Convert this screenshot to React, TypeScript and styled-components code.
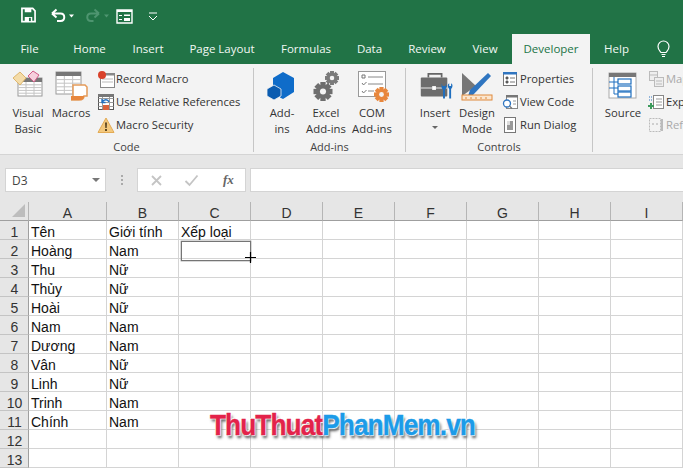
import React from "react";
import styled, { createGlobalStyle } from "styled-components";

const Global = createGlobalStyle`
  html, body { margin: 0; padding: 0; background: #fff; }
  body { width: 683px; height: 469px; overflow: hidden; font-family: "Open Sans", "Liberation Sans", sans-serif; }
`;
const Page = styled.div`position: relative; width: 683px; height: 469px; overflow: hidden; display: flex; flex-direction: column;`;
const TitleBar = styled.div`background: #217346; height: 34px; display: flex; align-items: center; padding: 0 0 2px 21px; flex: none; box-sizing: border-box;`;
const QatIcon = styled.span<{ $w: number; $ml?: number }>`display: block; width: ${p => p.$w}px; margin-left: ${p => p.$ml ?? 0}px; height: 18px; flex: none; svg { display: block; }`;
const TabBar = styled.div`background: #217346; height: 30px; display: flex; align-items: stretch; flex: none;`;
const Tab = styled.div<{ $w: number; $active?: boolean; $ml?: number }>`
  flex: none; width: ${p => p.$w}px; margin-left: ${p => p.$ml ?? 0}px; display: flex; align-items: center; justify-content: center; padding-bottom: 1px; box-sizing: border-box;
  font-size: 11.5px; color: ${p => p.$active ? "#217346" : "#f2f8f4"}; background: ${p => p.$active ? "#f3f3f3" : "transparent"};
  white-space: nowrap;
`;
const Ribbon = styled.div`background: #f3f3f3; height: 91px; display: flex; flex: none; border-bottom: 1px solid #d4d4d4; box-sizing: border-box; overflow: hidden;`;
const Group = styled.div<{ $w: number }>`flex: none; width: ${p => p.$w}px; height: 84px; display: flex; flex-direction: column; border-right: 1px solid #c6c6c6; margin-top: 4px; box-sizing: border-box;`;
const LastGroup = styled.div`flex: 1; margin-top: 4px; min-width: 0;`;
const GroupBody = styled.div<{ $pl: number }>`display: flex; flex: none; height: 72px; box-sizing: border-box; padding-left: ${p => p.$pl}px; padding-top: 2px;`;
const GroupLabel = styled.div`height: 12px; line-height: 14px; font-size: 11px; text-align: center; color: #444; flex: none;`;
const BigBtn = styled.div<{ $w: number }>`flex: none; width: ${p => p.$w}px; display: flex; flex-direction: column; align-items: center; font-size: 11.3px; line-height: 16px; color: #333; text-align: center; white-space: nowrap;`;
const BigIcon = styled.span`display: block; width: 38px; height: 35px; svg { display: block; }`;
const SmallStack = styled.div<{ $ml?: number }>`display: flex; flex-direction: column; margin: -3px 0 0 ${p => p.$ml ?? 0}px; flex: none;`;
const SmallBtn = styled.div<{ $off?: boolean }>`height: 23px; display: flex; align-items: center; gap: 1px; font-size: 11.2px; color: ${p => p.$off ? "#aaa" : "#333"}; white-space: nowrap; svg { display: block; flex: none; }`;
const Caret = styled.span`display: block; width: 0; height: 0; margin-top: 5px; border: 3px solid transparent; border-top: 3px solid #666; border-bottom: 0;`;
const FormulaRow = styled.div`background: #e6e6e6; height: 47px; flex: none; display: flex; align-items: flex-start; padding: 13px 0 0 5px; box-sizing: border-box;`;
const NameBox = styled.div`width: 101px; height: 24px; box-sizing: border-box; background: #fff; border: 1px solid #d4d4d4; display: flex; align-items: center; justify-content: space-between; padding: 0 5px 0 6px; font-size: 12px; color: #444;`;
const NameArrow = styled.span`display: block; width: 0; height: 0; border: 4px solid transparent; border-top: 4px solid #777; border-bottom: 0;`;
const Dots = styled.div`width: 31px; flex: none; display: flex; flex-direction: column; align-items: center; gap: 2px; padding-top: 7px;`;
const Dot = styled.span`display: block; width: 2px; height: 2px; background: #aaa;`;
const FxBox = styled.div`width: 109px; height: 24px; box-sizing: border-box; background: #fff; border: 1px solid #d4d4d4; display: flex; align-items: center; padding-left: 12px; gap: 21px; flex: none;`;
const FxLabel = styled.span`font-family: "Liberation Serif", serif; font-style: italic; font-weight: 700; font-size: 13px; color: #666; margin-left: 3px;`;
const FormulaInput = styled.div`flex: 1; height: 24px; margin-left: 4px; box-sizing: border-box; background: #fff; border: 1px solid #d4d4d4; border-right: 0;`;
const Sheet = styled.div`display: grid; grid-template-columns: 29px 78px repeat(8, 72px); grid-auto-rows: 19px; flex: 1; background: #fff;`;
const Corner = styled.div`background: #e6e6e6; border-right: 1px solid #b5b5b5; border-bottom: 1px solid #9f9f9f; box-sizing: border-box; height: 19px; display:flex; justify-content:flex-end; align-items:flex-end; padding: 0 3px 3px 0; svg{display:block;}`;
const ColHead = styled.div`background: #e6e6e6; border-right: 1px solid #b5b5b5; border-bottom: 1px solid #9f9f9f; box-sizing: border-box; text-align: center; font: 14px/22px "Liberation Sans", sans-serif; color: #333;`;
const RowHead = styled.div`background: #e6e6e6; border-right: 1px solid #9f9f9f; border-bottom: 1px solid #c4c4c4; box-sizing: border-box; text-align: center; font: 14px/22px "Liberation Sans", sans-serif; color: #333; padding-left: 1px;`;
const Cell = styled.div`
  border-right: 1px solid #d4d4d4; border-bottom: 1px solid #d4d4d4; box-sizing: border-box; font: 14px/23px "Liberation Sans", sans-serif; color: #111; padding-left: 2px; white-space: nowrap; position: relative;
`;
const Selection = styled.div`position: absolute; z-index: 2; left: 2px; top: 1px; right: -1px; bottom: -3px; border: 1px solid #757575; box-shadow: 0 0 0 .4px #a0a0a0;`;
const Cross = styled.svg`position: absolute; right: -6px; bottom: -3px; display: block;`;
const Watermark = styled.div`
  position: absolute; z-index: 3; left: 210px; top: 407px; font: 700 30px/36px "Liberation Sans", sans-serif; white-space: nowrap; letter-spacing: -1.05px;
  transform: scaleX(.875); transform-origin: left center; -webkit-text-stroke: .4px currentColor;
  text-shadow: 0 0 2px #fff, 1px 1px 1px #fff, -1px -1px 1px #fff, 2px 3px 3px #555;
`;
const Red = styled.span`color: #e3234a;`;
const Blue = styled.span`color: #1c9be8;`;

const Save = () => <svg width="15" height="16" viewBox="0 1 16 17"><path d="M1 2.500h11.500L15 5v11.500H1z" fill="none" stroke="#fff" strokeWidth="1.800" /><path d="M4 2.500h7v4H4zM4 16.500v-5h8v5" fill="#fff" /><rect x="8.500" y="12.500" width="2" height="3.500" fill="#217346" /></svg>;
const Undo = ({ c = "#fff" }: { c?: string }) => <svg width="24" height="18" viewBox="0 0 24 18"><path d="M2 6.500h8.500c5 0 5 7.500 0 7.500H7M2 6.500l4.500-4M2 6.500l4.500 4" fill="none" stroke={c} strokeWidth="2" /><path d="M19 7.500h5l-2.500 3z" fill={c} /></svg>;
const Redo = ({ c = "#4e9570" }: { c?: string }) => <svg width="24" height="18" viewBox="0 0 24 18"><path d="M14 6.500H6c-5 0-5 7.500 0 7.500h2.500M14 6.500l-4.500-4M14 6.500l-4.500 4" fill="none" stroke={c} strokeWidth="2" /><path d="M19 7.500h5l-2.500 3z" fill={c} /></svg>;
const FormIcon = () => <svg width="17" height="18" viewBox="0 0 17 18"><path d="M1 3h15v13H1z" fill="none" stroke="#fff" strokeWidth="1.400" /><path d="M1 3h15v2H1z" fill="#fff" /><path d="M3 8h3v1H3zM8 7.500h6v1.500H8zM3 12h3v1H3zM8 11h6v3H8z" fill="#fff" /></svg>;
const QatMore = () => <svg width="10" height="18" viewBox="0 0 10 18"><path d="M1 6h8" stroke="#fff" /><path d="M1 9l4 4 4-4" fill="none" stroke="#fff" /></svg>;
const Bulb = () => <svg width="15" height="18" viewBox="0 0 15 18"><path d="M5 12.500C3.500 10.500 2 9.500 2 6.500a5.500 5.500 0 0 1 11 0c0 3-1.500 4-3 6z" fill="none" stroke="#fff" strokeWidth="1.200" /><path d="M5.500 14.500h4M6 16.500h3" stroke="#fff" strokeWidth="1.200" /></svg>;

const SheetGlyph = ({ x = 3, y = 6, w = 28, h = 24 }: { x?: number; y?: number; w?: number; h?: number }) => <g>
  <rect x={x} y={y} width={w} height={h} fill="#fff" stroke="#9a9a9a" />
  <rect x={x} y={y} width={w} height="4" fill="#777" />
  {[1, 2, 3, 4].map(i => <path key={i} d={`M${x} ${y + 4 + i * (h - 4) / 5}h${w}`} stroke="#c4c4c4" />)}
  <path d={`M${x + w / 3} ${y + 4}v${h - 4}M${x + 2 * w / 3} ${y + 4}v${h - 4}`} stroke="#c4c4c4" />
</g>;
const VisualBasic = () => <svg width="38" height="36" viewBox="0 0 38 36"><SheetGlyph x={9} y={8} w={24} h={18} /><path d="M4 8l7-6 6 6-6 7z" fill="#f4dca8" stroke="#deb66c" /><path d="M19 6l5-5 6 4-5 7z" fill="#f6cfdc" stroke="#d15b87" /></svg>;
const Macros = () => <svg width="38" height="36" viewBox="0 0 38 36"><SheetGlyph x={4} y={2} w={25} h={22} /><path d="M21 15h12l2 2v9h-3c0 3-2 4-5 4h-8c3 0 2-3 2-4z" fill="#fff" stroke="#e49b5a" strokeWidth="1.500" /><path d="M19 26h13c0 3-2 4-5 4h-8z" fill="#e8873d" /></svg>;
const Cube = () => <svg width="38" height="36" viewBox="0 0 38 36"><path d="M20 2l11 6v14l-11 7-3-1.500V20l-7-4V8z" fill="#0f6cc9" /><path d="M11 15l7 4v7l-7 4-7-4v-7z" fill="#0b5cb0" stroke="#f3f3f3" strokeWidth=".8" /></svg>;
const gear = (cx: number, cy: number, r: number, c: string) => <g fill={c}>
  {[0, 45, 90, 135].map(a => <rect key={a} x={cx - r * .28} y={cy - r} width={r * .56} height={r * 2} transform={`rotate(${a} ${cx} ${cy})`} />)}
  <circle cx={cx} cy={cy} r={r * .72} /><circle cx={cx} cy={cy} r={r * .32} fill="#f3f3f3" />
</g>;
const Excel = () => <svg width="38" height="36" viewBox="0 0 38 36">{gear(25, 8, 7, "#7a7a7a")}{gear(16, 21.500, 9.500, "#6e6e6e")}</svg>;
const Com = () => <svg width="38" height="36" viewBox="0 0 38 36"><rect x="5.500" y="1.500" width="27" height="25" fill="#fff" stroke="#999" /><path d="M9 5h3v3H9zM9 13l1.500 2 3-3M9 21l1.500 2 3-3" fill="none" stroke="#777" /><path d="M15 7h15M15 14h15M15 21h6" stroke="#888" />{gear(28.500, 24.500, 7.500, "#e8873d")}</svg>;
const Toolbox = () => <svg width="38" height="36" viewBox="-2 -2 40 38"><path d="M11 6V2h14v4" fill="none" stroke="#666" strokeWidth="1.800" /><rect x="3" y="6" width="28" height="20" rx="1" fill="#6d6d6d" /><rect x="15" y="15" width="4" height="4" fill="#fff" /><path d="M3 17h12M19 17h12" stroke="#f3f3f3" /><path d="M25 12v5l1.500 2v9h2v-9l1.500-2v-5l-1 3h-3z" fill="#1f6fbf" /><path d="M33 12c-2 1-2 4 0 6v10h2V18c2-2 2-5 0-6v3h-2z" fill="#1f6fbf" /></svg>;
const Design = () => <svg width="38" height="36" viewBox="0 0 38 36"><path d="M4 3l14 13L4 26z" fill="#777" /><path d="M12 20L30 3l3 3-18 19-5 1z" fill="#2f75c0" /><rect x="4" y="25" width="30" height="5" fill="#fbe6cf" stroke="#e08a3c" /><path d="M8 27v2M13 27v2M18 27v2M23 27v2M28 27v2" stroke="#e08a3c" /></svg>;
const Source = () => <svg width="38" height="36" viewBox="0 -2 38 36"><rect x="5" y="1" width="27" height="25" fill="#fff" stroke="#aaa" /><path d="M5 1h27v4H5z" fill="#777" /><path d="M10 5v17M10 10h4M10 16h4M10 22h4M5 10h5M5 16h5" stroke="#1f6fbf" /><rect x="14" y="7" width="13" height="5" fill="#fff" stroke="#1f6fbf" strokeWidth="1.200" /><rect x="14" y="14" width="13" height="5" fill="#fff" stroke="#1f6fbf" strokeWidth="1.200" /><rect x="14" y="20" width="13" height="5" fill="#fff" stroke="#1f6fbf" strokeWidth="1.200" /></svg>;
const S = ({ children }: { children: React.ReactNode }) => <svg width="18" height="18" viewBox="0 0 18 18">{children}</svg>;
const sm = (x = 4, y = 4, w = 13, h = 13, c = "#888") => <g><rect x={x + .5} y={y + .5} width={w} height={h} fill="#fff" stroke={c} /><rect x={x} y={y} width={w + 1} height="2.500" fill={c} /><path d={`M${x + 2} ${y + 6}h${w - 3}M${x + 2} ${y + 9}h${w - 3}`} stroke="#bbb" /></g>;
const Record = () => <S>{sm(3, 3, 14, 14)}<circle cx="5" cy="5" r="4" fill="#d9422b" /></S>;
const Relative = () => <S><rect x="1.500" y="1.500" width="15" height="15" fill="#fff" stroke="#555" /><path d="M1.500 5.500h15M1.500 9.500h15M1.500 13.500h15M5.500 1.500v15M12.500 1.500v15" stroke="#999" /><rect x="1" y="1" width="16" height="3" fill="#777" /><path d="M5 9c2-3 6-3 7 0M5 6v3.500h3.500" fill="none" stroke="#1f6fbf" strokeWidth="1.400" /><rect x="6" y="12" width="6" height="5" fill="#d9623b" /></S>;
const Warn = () => <S><path d="M9 2l8 14.500H1z" fill="#f3c87d" stroke="#e3ab55" /><path d="M8 6.500h2l-.3 5.500H8.300zM8 13h2v2H8z" fill="#5b4520" /></S>;
const Props = () => <S><rect x="2.500" y="2.500" width="13" height="13" fill="#fff" stroke="#777" /><rect x="2" y="2" width="14" height="2.500" fill="#2f75c0" /><path d="M5 7h2v2H5zM5 11h2v2H5zM9 8h5M9 12h5" stroke="#777" /></S>;
const ViewCode = () => <S><rect x="5.500" y="2.500" width="11" height="13" fill="#fff" stroke="#888" /><rect x="5" y="2" width="12" height="2.500" fill="#777" /><path d="M12 8h3M12 11h3" stroke="#999" /><circle cx="6" cy="10.500" r="3.500" fill="#fff" stroke="#2f75c0" strokeWidth="1.300" /><path d="M8.500 13l2.500 2.500" stroke="#777" strokeWidth="1.300" /></S>;
const RunDlg = () => <S><rect x="3.500" y="1.500" width="11" height="15" fill="#fff" stroke="#777" /><rect x="6" y="5" width="6" height="9" fill="#999" /><path d="M6 5h3v4H6z" fill="#ddd" /></S>;
const MapP = () => <S><rect x="2.500" y="1.500" width="8" height="9" fill="#eee" stroke="#bbb" /><rect x="7.500" y="7.500" width="9" height="9" fill="#eee" stroke="#bbb" /><path d="M9 11h6M9 14h6M3 5h7" stroke="#bbb" /></S>;
const Exp = () => <S><rect x="6.500" y="2.500" width="10" height="13" fill="#fff" stroke="#888" /><path d="M9 6h6M9 9h6M9 12h6" stroke="#999" /><path d="M1 13h6M4 10v6" stroke="#3c9a5c" strokeWidth="2" /><path d="M2 4h3M2 7h3" stroke="#2f75c0" strokeDasharray="1 1" /></S>;
const Ref = () => <S><rect x="2.500" y="2.500" width="11" height="13" fill="#f3f3f3" stroke="#bbb" strokeDasharray="2 1" /><path d="M15 3v12" stroke="#bbb" strokeWidth="2" /><path d="M5 8h2M9 8h2" stroke="#aaa" /></S>;
const CloseX = () => <svg width="13" height="13" viewBox="0 0 13 13"><path d="M2 2l9 9M11 2l-9 9" stroke="#c4c4c4" strokeWidth="1.800" /></svg>;
const Check = () => <svg width="15" height="13" viewBox="0 0 15 13"><path d="M1.500 7l4 4 8-9.500" fill="none" stroke="#c4c4c4" strokeWidth="1.800" /></svg>;

const rows: [string, string, string][] = [
  ["Tên", "Giới tính", "Xếp loại"], ["Hoàng", "Nam", ""], ["Thu", "Nữ", ""], ["Thủy", "Nữ", ""], ["Hoài", "Nữ", ""],
  ["Nam", "Nam", ""], ["Dương", "Nam", ""], ["Vân", "Nữ", ""], ["Linh", "Nữ", ""], ["Trinh", "Nam", ""], ["Chính", "Nam", ""], ["", "", ""], ["", "", ""],
];
const cols = ["A", "B", "C", "D", "E", "F", "G", "H", "I"];
const tabs: [string, number][] = [["File", 59], ["Home", 61], ["Insert", 56], ["Page Layout", 92], ["Formulas", 76], ["Data", 51], ["Review", 64], ["View", 52]];

export default function App() {
  return <Page>
    <Global />
    <TitleBar>
      <QatIcon $w={16}><Save /></QatIcon>
      <QatIcon $w={24} $ml={13}><Undo /></QatIcon>
      <QatIcon $w={24} $ml={11}><Redo /></QatIcon>
      <QatIcon $w={17} $ml={7}><FormIcon /></QatIcon>
      <QatIcon $w={10} $ml={15}><QatMore /></QatIcon>
    </TitleBar>
    <TabBar>
      {tabs.map(([t, w]) => <Tab key={t} $w={w}>{t}</Tab>)}
      <Tab $w={78} $active $ml={1}>Developer</Tab>
      <Tab $w={53}>Help</Tab>
      <Tab $w={41}><Bulb /></Tab>
    </TabBar>
    <Ribbon>
      <Group $w={254}>
        <GroupBody $pl={7}>
          <BigBtn $w={42}><BigIcon><VisualBasic /></BigIcon>Visual<br />Basic</BigBtn>
          <BigBtn $w={44}><BigIcon><Macros /></BigIcon>Macros</BigBtn>
          <SmallStack $ml={4}>
            <SmallBtn><Record />Record Macro</SmallBtn>
            <SmallBtn><Relative />Use Relative References</SmallBtn>
            <SmallBtn><Warn />Macro Security</SmallBtn>
          </SmallStack>
        </GroupBody>
        <GroupLabel>Code</GroupLabel>
      </Group>
      <Group $w={152}>
        <GroupBody $pl={7}>
          <BigBtn $w={42}><BigIcon><Cube /></BigIcon>Add-<br />ins</BigBtn>
          <BigBtn $w={46}><BigIcon><Excel /></BigIcon>Excel<br />Add-ins</BigBtn>
          <BigBtn $w={46}><BigIcon><Com /></BigIcon>COM<br />Add-ins</BigBtn>
        </GroupBody>
        <GroupLabel>Add-ins</GroupLabel>
      </Group>
      <Group $w={187}>
        <GroupBody $pl={7}>
          <BigBtn $w={44}><BigIcon><Toolbox /></BigIcon>Insert<Caret /></BigBtn>
          <BigBtn $w={40}><BigIcon><Design /></BigIcon>Design<br />Mode</BigBtn>
          <SmallStack $ml={4}>
            <SmallBtn><Props />Properties</SmallBtn>
            <SmallBtn><ViewCode />View Code</SmallBtn>
            <SmallBtn><RunDlg />Run Dialog</SmallBtn>
          </SmallStack>
        </GroupBody>
        <GroupLabel>Controls</GroupLabel>
      </Group>
      <LastGroup>
        <GroupBody $pl={11}>
          <BigBtn $w={38}><BigIcon><Source /></BigIcon>Source</BigBtn>
          <SmallStack $ml={5}>
            <SmallBtn $off><MapP />Map Properties</SmallBtn>
            <SmallBtn><Exp />Expansion Packs</SmallBtn>
            <SmallBtn $off><Ref />Refresh Data</SmallBtn>
          </SmallStack>
        </GroupBody>
      </LastGroup>
    </Ribbon>
    <FormulaRow>
      <NameBox>D3<NameArrow /></NameBox>
      <Dots><Dot /><Dot /><Dot /></Dots>
      <FxBox><CloseX /><Check /><FxLabel>fx</FxLabel></FxBox>
      <FormulaInput />
    </FormulaRow>
    <Sheet>
      <Corner><svg width="13" height="13" viewBox="0 0 13 13"><path d="M13 0v13H0z" fill="#bdbdbd" /></svg></Corner>
      {cols.map(c => <ColHead key={c}>{c}</ColHead>)}
      {rows.map((r, i) => <React.Fragment key={i}>
        <RowHead>{i + 1}</RowHead>
        {cols.map((c, j) => <Cell key={c}>{r[j] ?? ""}{i === 1 && j === 2 && <Selection><Cross width="11" height="11" viewBox="0 0 11 11"><path d="M5.500 0v11M0 5.500h11" stroke="#000" strokeWidth="1.200" /></Cross></Selection>}</Cell>)}
      </React.Fragment>)}
    </Sheet>
    <Watermark><Red>ThuThuat</Red><Blue>PhanMem.vn</Blue></Watermark>
  </Page>;
}
